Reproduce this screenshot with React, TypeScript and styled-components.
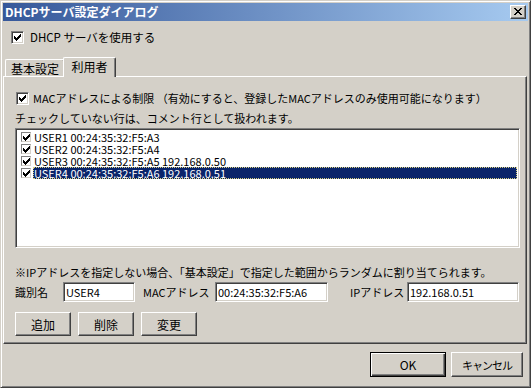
import React from "react";
import styled, { createGlobalStyle } from "styled-components";

interface User {
	name: string;
	mac: string;
	ip?: string;
}

const USERS: User[] = [
	{ name: "USER1", mac: "00:24:35:32:F5:A3" },
	{ name: "USER2", mac: "00:24:35:32:F5:A4" },
	{ name: "USER3", mac: "00:24:35:32:F5:A5", ip: "192.168.0.50" },
	{ name: "USER4", mac: "00:24:35:32:F5:A6", ip: "192.168.0.51" },
];

// classic 7x7 check glyph, one 3px column per x
const CheckGlyph = () => (
	<svg width="7" height="7" viewBox="0 0 7 7" shapeRendering="crispEdges">
		{[2, 3, 4, 3, 2, 1, 0].map((y, x) => (
			<rect key={x} x={x} y={y} width="1" height="3" fill="#000" />
		))}
	</svg>
);

const CloseGlyph = () => (
	<svg width="8" height="7" viewBox="0 0 8 7" shapeRendering="crispEdges">
		<rect x="0" y="0" width="2" height="1" />
		<rect x="6" y="0" width="2" height="1" />
		<rect x="1" y="1" width="2" height="1" />
		<rect x="5" y="1" width="2" height="1" />
		<rect x="2" y="2" width="4" height="1" />
		<rect x="3" y="3" width="2" height="1" />
		<rect x="2" y="4" width="4" height="1" />
		<rect x="1" y="5" width="2" height="1" />
		<rect x="5" y="5" width="2" height="1" />
		<rect x="0" y="6" width="2" height="1" />
		<rect x="6" y="6" width="2" height="1" />
	</svg>
);

const App = () => {
	const selected = 3;
	return (
		<>
			<GlobalStyle />
			<Window>
				<TitleBar>
					<span>DHCPサーバ設定ダイアログ</span>
					<CloseButton>
						<CloseGlyph />
					</CloseButton>
				</TitleBar>

				<TopCheck>
					<CheckBox>
						<CheckGlyph />
					</CheckBox>
					<span>DHCP サーバを使用する</span>
				</TopCheck>

				<TabStrip>
					<Tab $width={60}>基本設定</Tab>
					<Tab $width={53} $active>
						利用者
					</Tab>
				</TabStrip>

				<Panel>
					<MacCheck>
						<CheckBox>
							<CheckGlyph />
						</CheckBox>
						<span>MACアドレスによる制限 （有効にすると、登録したMACアドレスのみ使用可能になります）</span>
					</MacCheck>
					<Hint>チェックしていない行は、コメント行として扱われます。</Hint>

					<ListBox>
						{USERS.map((u, i) => (
							<ListRow key={u.name}>
								<SmallCheck>
									<CheckGlyph />
								</SmallCheck>
								<RowText $selected={i === selected}>
									{[u.name, u.mac, u.ip].filter(Boolean).join(" ")}
								</RowText>
							</ListRow>
						))}
					</ListBox>

					<Note>※IPアドレスを指定しない場合、「基本設定」で指定した範囲からランダムに割り当てられます。</Note>

					<FieldRow>
						<FieldLabel>識別名</FieldLabel>
						<TextBox $width={72} readOnly value="USER4" />
						<FieldLabel $indent={8}>MACアドレス</FieldLabel>
						<TextBox $width={113} readOnly value="00:24:35:32:F5:A6" />
						<FieldLabel $indent={22}>IPアドレス</FieldLabel>
						<TextBox $width={112} readOnly value="192.168.0.51" />
					</FieldRow>

					<ButtonRow>
						<Button $width={56} $height={24}>追加</Button>
						<Button $width={56} $height={24}>削除</Button>
						<Button $width={56} $height={24}>変更</Button>
					</ButtonRow>
				</Panel>

				<Footer>
					<Button $width={76} $height={25} $default>
						OK
					</Button>
					<Button $width={72} $height={25}>
						<Narrow>キャンセル</Narrow>
					</Button>
				</Footer>
			</Window>
		</>
	);
};

export default App;

const GlobalStyle = createGlobalStyle`
	html, body {
		margin: 0;
		background: #d4d0c8;
	}
	body {
		font-family: "Noto Sans CJK JP", "Liberation Sans", sans-serif;
		font-size: 11px;
		color: #000;
	}
`;

const Window = styled.div`
	width: 531px;
	height: 388px;
	box-sizing: border-box;
	border: 1px solid;
	border-color: #d4d0c8 #404040 #404040 #d4d0c8;
	box-shadow: inset 1px 1px #fff, inset -1px -1px #808080;
	padding: 2px;
	background: #d4d0c8;
	display: flex;
	flex-direction: column;
`;

const TitleBar = styled.div`
	height: 18px;
	flex-shrink: 0;
	display: flex;
	align-items: center;
	justify-content: space-between;
	padding: 0 2px;
	background: linear-gradient(to right, #36589a, #a6caf0);
	color: #fff;
	font-weight: 700;
	font-size: 12px;
	line-height: 18px;
`;

const CloseButton = styled.div`
	width: 16px;
	height: 14px;
	box-sizing: border-box;
	border: 1px solid;
	border-color: #fff #404040 #404040 #fff;
	box-shadow: inset -1px -1px #808080;
	background: #d4d0c8;
	display: flex;
	align-items: center;
	justify-content: center;
	padding-bottom: 1px;
`;

const CheckRow = styled.div`
	display: flex;
	align-items: center;
	height: 13px;
	line-height: 13px;
	white-space: nowrap;
`;

const TopCheck = styled(CheckRow)`
	margin: 10px 0 13px 8px;
	gap: 6px;
	font-size: 11.5px;
`;

const MacCheck = styled(CheckRow)`
	margin: 15px 0 0 1px;
	gap: 4px;
`;

const CheckBox = styled.span`
	width: 13px;
	height: 13px;
	flex-shrink: 0;
	box-sizing: border-box;
	border: 1px solid;
	border-color: #808080 #fff #fff #808080;
	box-shadow: inset 1px 1px #404040, inset -1px -1px #d4d0c8;
	background: #fff;
	display: flex;
	align-items: center;
	justify-content: center;
`;

const TabStrip = styled.div`
	position: relative;
	z-index: 1;
	display: flex;
	align-items: flex-end;
	height: 20px;
	padding-left: 2px;
	margin-bottom: -1px;
`;

const Tab = styled.div<{ $active?: boolean; $width: number }>`
	box-sizing: border-box;
	width: ${(p) => p.$width}px;
	height: ${(p) => (p.$active ? 20 : 17)}px;
	margin-bottom: ${(p) => (p.$active ? 0 : 1)}px;
	margin-left: ${(p) => (p.$active ? -2 : 0)}px;
	border-top: 1px solid #fff;
	border-left: 1px solid #fff;
	border-right: 1px solid #404040;
	border-radius: 2px 2px 0 0;
	box-shadow: inset -1px 0 #808080;
	background: #d4d0c8;
	display: flex;
	align-items: center;
	justify-content: center;
	padding-bottom: ${(p) => (p.$active ? 2 : 0)}px;
	font-size: 12px;
	white-space: nowrap;
`;

const Panel = styled.div`
	box-sizing: border-box;
	height: 268px;
	margin-right: 1px;
	border: 1px solid;
	border-color: #fff #404040 #404040 #fff;
	box-shadow: inset -1px -1px #808080;
	padding-left: 11px;
	display: flex;
	flex-direction: column;
	flex-shrink: 0;
`;

const Hint = styled.div`
	margin-top: 6px;
	height: 14px;
	line-height: 14px;
	white-space: nowrap;
`;

const Sunken = `
	box-sizing: border-box;
	border: 1px solid;
	border-color: #808080 #fff #fff #808080;
	box-shadow: inset 1px 1px #404040, inset -1px -1px #d4d0c8;
	background: #fff;
`;

const ListBox = styled.div`
	${Sunken}
	width: 505px;
	height: 120px;
	margin-top: 3px;
	padding: 2px 2px 0 2px;
	display: flex;
	flex-direction: column;
`;

const ListRow = styled.div`
	display: flex;
	align-items: center;
	height: 12px;
	padding-left: 3px;
	gap: 2px;
`;

const SmallCheck = styled.span`
	width: 10px;
	height: 10px;
	box-sizing: border-box;
	border: 1px solid;
	border-color: #808080 #d4d0c8 #d4d0c8 #808080;
	display: flex;
	align-items: center;
	justify-content: center;
	flex-shrink: 0;
`;

const RowText = styled.span<{ $selected?: boolean }>`
	flex: 1;
	height: 12px;
	line-height: 12px;
	padding-left: 1px;
	white-space: nowrap;
	background: ${(p) => (p.$selected ? "#0a246a" : "transparent")};
	color: ${(p) => (p.$selected ? "#fff" : "#000")};
	outline: ${(p) => (p.$selected ? "1px dotted #d8d080" : "none")};
	outline-offset: -1px;
`;

const Note = styled.div`
	margin-top: 17px;
	height: 14px;
	line-height: 14px;
	white-space: nowrap;
`;

const FieldRow = styled.div`
	margin-top: 3px;
	display: grid;
	grid-template-columns: 48px 72px 80px 113px 79px 112px;
	align-items: center;
	height: 20px;
`;

const FieldLabel = styled.span<{ $indent?: number }>`
	padding-left: ${(p) => p.$indent ?? 0}px;
	white-space: nowrap;
`;

const TextBox = styled.input<{ $width: number }>`
	${Sunken}
	width: ${(p) => p.$width}px;
	height: 20px;
	padding: 0 2px;
	margin: 0;
	font: inherit;
	color: #000;
	outline: none;
`;

const ButtonRow = styled.div`
	margin-top: 10px;
	display: flex;
	gap: 7px;
`;

const Button = styled.button<{ $width: number; $height: number; $default?: boolean }>`
	box-sizing: border-box;
	width: ${(p) => p.$width}px;
	height: ${(p) => p.$height}px;
	padding: 0;
	margin: 0;
	font: inherit;
	font-size: 12px;
	color: #000;
	background: #d4d0c8;
	border: 1px solid;
	border-color: ${(p) => (p.$default ? "#000" : "#fff #404040 #404040 #fff")};
	box-shadow: ${(p) =>
		p.$default
			? "inset 1px 1px #fff, inset -1px -1px #404040, inset -2px -2px #808080"
			: "inset -1px -1px #808080"};
`;

const Narrow = styled.span`
	font-size: 11px;
	letter-spacing: -1px;
`;

const Footer = styled.div`
	flex: 1;
	display: flex;
	justify-content: flex-end;
	align-items: flex-start;
	gap: 5px;
	padding: 8px 5px 0 0;
`;
